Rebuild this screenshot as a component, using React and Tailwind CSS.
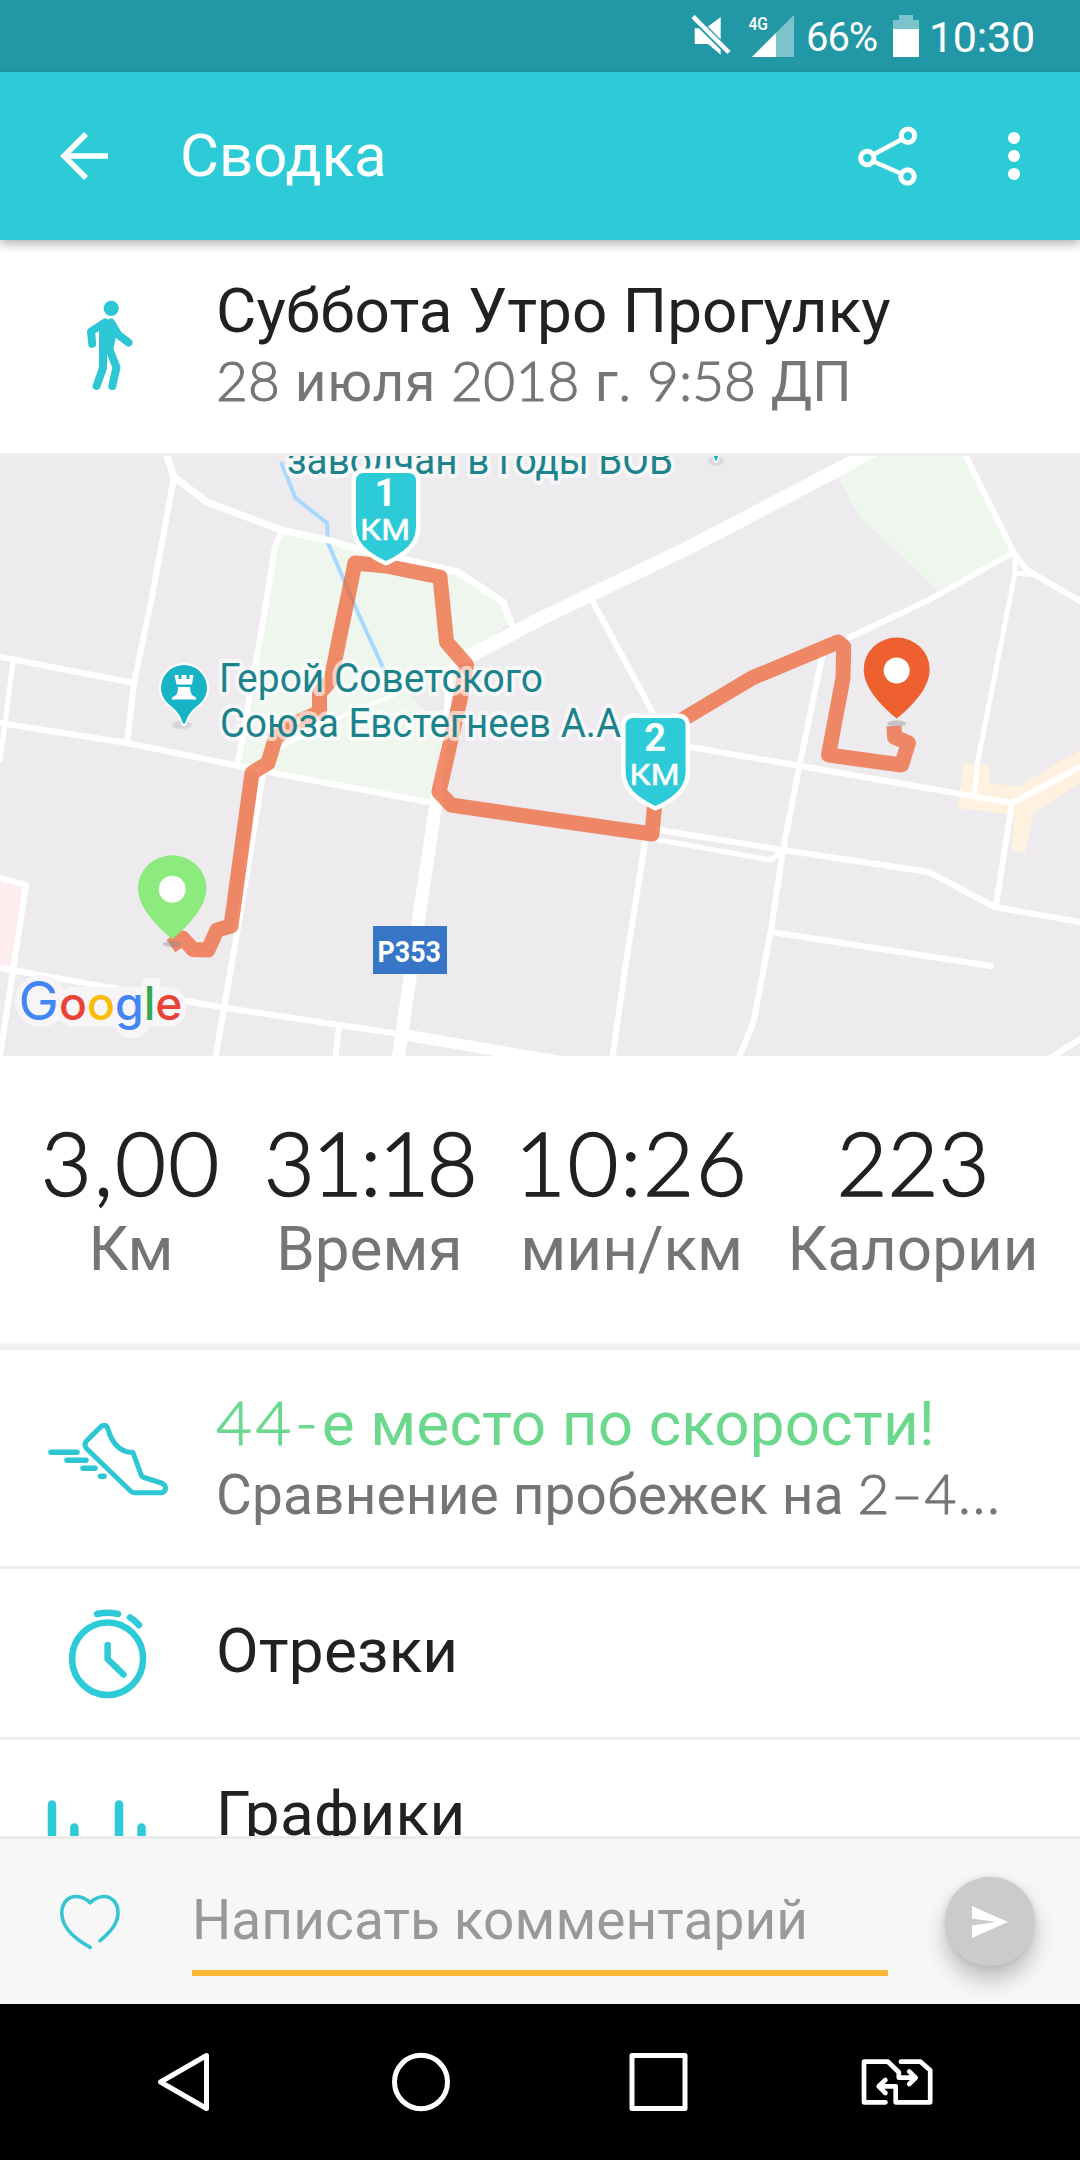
import React, { useState } from "react";

const stats = [
  { value: "3,00", label: "Км", box: "w-[172px]", spacing: "tracking-[2px]" },
  { value: "31:18", label: "Время", box: "w-[206px]", spacing: "tracking-[-2.8px]" },
  { value: "10:26", label: "мин/км", box: "w-[220px]", spacing: "tracking-[1.7px]" },
  { value: "223", label: "Калории", box: "w-[244px]", spacing: "tracking-normal" },
];

const parks = [
  "282,532 328,542 458,572 503,602 510,623 468,655 448,670 448,700 429,802 238,765 255,657 275,547",
  "862,456 965,456 1010,553 939,593 888,543 860,518 836,473",
];

// [points, width]
const roads = [
  ["165,450 174,477 207,502 281,530 327,540 362,550 458,572 503,602 511,623", 7],
  ["174,477 152,597 134,683 127,743", 6],
  ["0,657 134,683", 6],
  ["13,662 5,723 0,760", 5],
  ["0,723 127,743 244,767 269,772 427,802", 6],
  ["281,532 275,547 262,627 238,762", 6],
  ["263,773 241,910 215,1060", 6],
  ["468,657 450,668 446,730 437,797", 7],
  ["437,797 418,923 398,1060", 13],
  ["468,657 540,619 688,548 843,467 875,449", 14],
  ["592,600 654,715", 6],
  ["963,450 1015,555 1027,570 1080,601", 6],
  ["1012,553 929,600 850,637", 6],
  ["1015,555 1015,573 977,765 975,793", 5],
  ["1015,573 1036,575", 5],
  ["822,657 800,763 783,850 771,930 753.5,1022 738,1060", 6],
  ["690,747 795,765 1012,803 1080,767", 6],
  ["659,830 783,850 929,872 994.5,907 1080,922", 6],
  ["659,840 771,860 781,852", 5],
  ["771,932 991,966", 6],
  ["1012,803 996,905", 6],
  ["645,842 626,963 612,1060", 6],
  ["0,878 26,885 0,1056", 6],
  ["0,968 220,1007 339,1025 393,1033", 6],
  ["400,1034 540,1058 570,1063", 11],
  ["339,1027 335,1060", 6],
  ["1050,1058 1082,1038", 6],
  ["281,747 345,715 396,694", 4],
];

const route =
  "171,946 182.5,938 193,949.5 208,950 217,930 231,926 252,773 268,763 275.5,738 288,727 319.5,712 319.5,693 331,680 339,640 355,563 386,566 440,577 446.5,642 466.5,665 460,700 439,792 451,805 540,818 652,834 655,800 655,740 685,718 752,678 838,642 843.7,647 843,678 828.5,755 901.5,765 908.5,743 894.5,737 894,726";

const mapLabels = [
  { text: "заводчан в годы ВОВ", x: 287, y: 474, width: 386 },
  { text: "Герой Советского", x: 219, y: 691.5, width: 324 },
  { text: "Союза Евстегнеев А.А", x: 220, y: 737, width: 401 },
];

function StatusBar() {
  return (
    <div className="flex h-[72px] items-center justify-end bg-[#2298a6] pr-[45px] text-white">
      <svg width="39" height="42" viewBox="0 0 39 42" fill="#fff">
        <path d="M1 1.5 37 37.500" stroke="#fff" strokeWidth="4.500" />
        <path d="M16 11.500 28.700 2v22.500zM2.700 13.300h4.300l21.700 21.500v5L16 29H2.700z" />
      </svg>
      <svg className="ml-[17px]" width="47" height="42" viewBox="0 0 47 42">
        <path d="M46 0v42H4z" fill="#7cc3cb" />
        <path d="M28 18v24H4z" fill="#fff" />
        <text x="0.500" y="15" className="font-['Roboto'] text-[18px] font-medium" textLength="19.500" lengthAdjust="spacingAndGlyphs" fill="#fff">
          4G
        </text>
      </svg>
      <span className="ml-[11px] w-[87px] pt-[3px] text-[40px] tracking-[-1px]">66%</span>
      <svg width="26" height="42" viewBox="0 0 26 42">
        <path d="M6 0h14v5h6v9H0V5h6z" fill="#7cc3cb" />
        <path d="M0 14h26v28H0z" fill="#fff" />
      </svg>
      <span className="ml-[10px] pt-[2px] text-[43px] tracking-[-0.2px]">10:30</span>
    </div>
  );
}

function Header() {
  return (
    <header className="relative z-10 flex h-[168px] items-center bg-[#2dcbd7] pl-[60px] pr-[60px] text-white shadow-[0_4px_10px_rgba(0,0,0,0.3)]">
      <svg width="48" height="48" viewBox="0 0 48 48" fill="none" stroke="#fff" strokeWidth="5.500">
        <path d="M48 24H4M26 2 4 24l22 22" />
      </svg>
      <h1 className="ml-[72px] text-[60px]">Сводка</h1>
      <svg className="ml-auto" width="60" height="60" viewBox="0 0 60 60" fill="none" stroke="#fff">
        <path d="M14.500 29 44.500 13M14.500 35l29.500 13" strokeWidth="4.500" />
        <circle cx="50" cy="9.700" r="6.700" strokeWidth="5" />
        <circle cx="9.300" cy="32" r="6.700" strokeWidth="5" />
        <circle cx="49.500" cy="50.500" r="6.700" strokeWidth="5" />
      </svg>
      <svg className="ml-[90px]" width="12" height="48" viewBox="0 0 12 48" fill="#fff">
        <circle cx="6" cy="6" r="6" />
        <circle cx="6" cy="24" r="6" />
        <circle cx="6" cy="42" r="6" />
      </svg>
    </header>
  );
}

function WalkIcon() {
  return (
    <svg width="46" height="91" viewBox="0 0 46 91" fill="none" stroke="#2dc6d4" strokeWidth="8" strokeLinecap="round" strokeLinejoin="round">
      <circle cx="24.200" cy="8.300" r="7.600" fill="#2dc6d4" stroke="none" />
      <path d="M18 22.500 4 31.500l1.200 12.300M24 22.500 31.500 35l10 7.500" />
      <path d="M16 24l9 1 1 6-3 15h-7z" fill="#2dc6d4" />
      <path d="M16 46v22L9.600 86M21.500 47l8 20.500L25.300 86" />
    </svg>
  );
}

function ShoeIcon() {
  return (
    <svg width="124" height="74" viewBox="0 0 124 74" fill="none" stroke="#2dc6d4" strokeWidth="5" strokeLinecap="round" strokeLinejoin="round">
      <path d="M53 4.500 39.500 18q-3 3.500 0 7.500L83.500 68q1.700 1.700 4 1.700h27q4-.7 4-5-.3-3-4-4.700L97 54.500q-2.500-.8-3-3L86 29.500l-7-.8Q66 24 61 6.500q-1-4.500-4-4.300-2 .3-4 2.300z" />
      <path d="M4 29.300H30M20 37.300h19M36 45.300h12M53.500 53.300H57" strokeWidth="5.500" />
    </svg>
  );
}

function TimerIcon() {
  return (
    <svg width="78" height="90" viewBox="0 0 78 90" fill="none" stroke="#2dcbd7" strokeWidth="6.500" strokeLinecap="round" strokeLinejoin="round">
      <ellipse cx="38.600" cy="49.700" rx="35.500" ry="36.300" />
      <path d="M38.600 36v14L54.500 65.500M28 5q10.500-2.300 21 0M61 8.500q5 3 9 7.500" />
    </svg>
  );
}

function BarsIcon() {
  return (
    <svg width="99" height="90" viewBox="0 0 99 90" fill="none" stroke="#2dcbd7" strokeWidth="8.500" strokeLinecap="round">
      <path d="M5 4.500V86M27.400 27.500V86M72 4.500V86M94.500 27.500V86" />
    </svg>
  );
}

function KmMarker({ x, y, n }) {
  return (
    <g transform={`translate(${x} ${y})`}>
      <path
        d="M-22 0h44q8 0 8 8v46q0 14-13 24Q9 84 0 88q-9-4-17-10-13-10-13-24V8q0-8 8-8z"
        fill="#2dcbd7"
        stroke="#fff"
        strokeWidth="9"
        strokeLinejoin="round"
        className="[paint-order:stroke]"
      />
      <text x="-0.500" y="33" textAnchor="middle" className="font-['Roboto'] text-[38px] font-bold" fill="#fff">
        {n}
      </text>
      <text x="-26" y="66.500" textLength="50" lengthAdjust="spacingAndGlyphs" className="font-['Roboto'] text-[29px]" fill="#fff" stroke="#fff" strokeWidth="0.5">
        КМ
      </text>
    </g>
  );
}

function Pin({ x, y, scale, color }) {
  return (
    <g>
      <ellipse cx={x} cy={y + 5} rx="9.500" ry="3" fill="#8a8a90" fillOpacity="0.4" />
      <g transform={`translate(${x} ${y}) scale(${scale})`}>
        <path d="M0 0C-16-13-33-31-33-49a33 32 0 0 1 66 0C33-31 16-13 0 0z" fill={color} />
        <circle cy="-48" r="13" fill="#fff" />
      </g>
    </g>
  );
}

function RouteMap() {
  return (
    <svg className="block" width="1080" height="600" viewBox="0 456 1080 600">
      <rect y="456" width="1080" height="600" fill="#edebee" />
      {parks.map((points) => (
        <polygon key={points} points={points} fill="#eef6ee" />
      ))}
      <path d="M404 690l40-12v32l-18 2z" fill="#edebee" />
      <path d="M0 880l24 6-12 81H0z" fill="#fdedee" />
      <path d="M963.500 763l26.500 2-1 18 30 4 37-24 24-12v32l-46 29-9 41-13.500-3 3-35-57-7z" fill="#fff1df" />
      {roads.map(([points, width]) => (
        <polyline key={points} points={points} fill="none" stroke="#fff" strokeWidth={width} strokeLinejoin="round" strokeLinecap="round" />
      ))}
      <polyline points="281,462 295.500,498 327,523 328,543 358,613 386,674" fill="none" stroke="#a9d8ff" strokeWidth="4" />
      <polyline points="324,539 332,541" fill="none" stroke="#fff" strokeWidth="6" />
      <polyline points={route} fill="none" stroke="#ee6030" strokeOpacity="0.72" strokeWidth="15" strokeLinejoin="round" />

      {mapLabels.map((label) => (
        <text
          key={label.text}
          x={label.x}
          y={label.y}
          textLength={label.width}
          lengthAdjust="spacingAndGlyphs"
          className="font-['Roboto'] text-[41.5px] [paint-order:stroke]"
          fill="#1b838c"
          stroke="#fff"
          strokeOpacity="0.6"
          strokeWidth="8"
          strokeLinejoin="round"
        >
          {label.text}
        </text>
      ))}

      <ellipse cx="716" cy="461" rx="8" ry="5" fill="#dddbde" />
      <path d="M711 450h10l-3.500 10.500q-1.500 2.500-3 0z" fill="#17b4c6" stroke="#fff" strokeWidth="1.500" />

      <ellipse cx="182" cy="725" rx="10" ry="4" fill="#d6d4d8" />
      <path d="M184 725q-2 0-3-4-3-9-14-17-7-7-7-16a24 24 0 0 1 48 0q0 9-7 16-11 8-14 17-1 4-3 4z" fill="#17b4c6" stroke="#fff" strokeWidth="2" />
      <path d="M174.500 675h4v4h3v-4h5v4h3v-4h4l-1.500 9.500h-15.500zM178 687h12q.5 6 2 8l4 2.500v2h-24v-2l4-2.500q2-2 2-8z" fill="#fff" />

      <rect x="373" y="926" width="74" height="48" fill="#3775c7" />
      <text x="377.500" y="961.500" textLength="63.500" lengthAdjust="spacingAndGlyphs" className="font-['Roboto'] text-[29px] font-bold" fill="#fff">
        P353
      </text>

      <g fill="#f8f5f9">
        <circle cx="41" cy="1001" r="26" />
        <rect x="56" y="987" width="130" height="40" rx="18" />
        <rect x="142" y="978" width="18" height="46" />
        <rect x="115" y="990" width="34" height="48" rx="14" />
      </g>
      <text x="18.500" y="1020" textLength="164" lengthAdjust="spacingAndGlyphs" className="font-['Inter'] text-[46px] font-medium">
        <tspan className="text-[54px] font-normal" fill="#4285f4">G</tspan>
        <tspan fill="#ea4335">o</tspan>
        <tspan fill="#fbbc05">o</tspan>
        <tspan fill="#4285f4">g</tspan>
        <tspan fill="#34a853">l</tspan>
        <tspan fill="#ea4335">e</tspan>
      </text>

      <KmMarker x={386} y={473} n="1" />
      <KmMarker x={655.6} y={718} n="2" />
      <Pin x={172.2} y={939} scale={1.035} color="#8deb7d" />
      <Pin x={896.7} y={718.5} scale={1} color="#ee6030" />
    </svg>
  );
}

// light digits sit next to the regular Cyrillic text
function Num({ children, className = "" }) {
  return (
    <span className={`font-['Lato'] font-light leading-none [-webkit-text-stroke:1.1px_currentColor] ${className}`}>
      {children}
    </span>
  );
}

function Row({ icon, children, className }) {
  return (
    <div className={`flex ${className}`}>
      <div className="flex w-[216px] shrink-0 items-start">{icon}</div>
      <div className="min-w-0 whitespace-nowrap">{children}</div>
    </div>
  );
}

function CommentBar() {
  const [comment, setComment] = useState("");

  return (
    <div className="flex h-[168px] items-start border-t-[3px] border-[#ececec] bg-[#f7f7f7] pl-[60px]">
      <svg className="mt-[54px]" width="60" height="57" viewBox="0 0 60 57" fill="none" stroke="#36c5d2" strokeWidth="3.600" strokeLinecap="round" strokeLinejoin="round">
        <path d="M30.200 54.300C14 45.500 1.800 34 1.800 20 1.800 10 8 3.500 16 3.500c6 0 10 2 14.200 6.300C34.500 5.500 38.500 3.500 44 3.500c8 0 14 6.500 14 16.500 0 11-9 20.500-18 27.700" />
      </svg>
      <input
        value={comment}
        onChange={(e) => setComment(e.target.value)}
        placeholder="Написать комментарий"
        className="ml-[72px] mt-[48px] h-[89px] w-[696px] border-b-[6px] border-[#fcb636] bg-transparent pb-[17px] text-[55px] leading-[66px] tracking-[0.1px] outline-none placeholder:text-[#999999] placeholder:opacity-100"
      />
      <button className="ml-[57px] mt-[38px] flex h-[89px] w-[90px] items-center justify-center rounded-full bg-[#cbcbcb] shadow-[0_14px_22px_rgba(0,0,0,0.24),0_0_6px_rgba(0,0,0,0.1)]">
        <svg width="36" height="32" viewBox="0 0 36 32" fill="#fff">
          <path d="M0 0 36 16 0 32V19.500L24 16 0 12.500z" />
        </svg>
      </button>
    </div>
  );
}

function NavBar() {
  return (
    <nav className="flex h-[156px] items-center bg-black pl-[157px]">
      <svg width="52" height="60" viewBox="0 0 52 60" fill="none" stroke="#fff" strokeWidth="5" strokeLinejoin="round">
        <path d="M49.500 3.500v53L3.500 30z" />
      </svg>
      <svg className="ml-[183px]" width="58" height="60" viewBox="0 0 58 60" fill="none" stroke="#fff" strokeWidth="5">
        <ellipse cx="29" cy="30" rx="26.500" ry="26.700" />
      </svg>
      <svg className="ml-[179px]" width="59" height="60" viewBox="0 0 59 60" fill="none" stroke="#fff" strokeWidth="5" strokeLinejoin="round">
        <path d="M3 3.500h53v53H3z" />
      </svg>
      <svg className="ml-[173px]" width="72" height="48" viewBox="0 0 72 48" fill="none" stroke="#fff" strokeWidth="4.700" strokeLinecap="round" strokeLinejoin="round">
        <path d="M24.500 44.300H3V3.700h24l10.800 10.600v5.400H54M48.200 13.500l6.500 6.200-6.500 6.300" />
        <path d="M39.900 3.700h19.600l9.700 8.600v32H34.700v-16H18M24.400 22l-6.700 6.300 6.700 6.700" />
      </svg>
    </nav>
  );
}

function App() {
  return (
    <div className="flex h-[2160px] w-[1080px] flex-col overflow-hidden bg-white font-['Roboto',sans-serif] text-[#212121]">
      <StatusBar />
      <Header />

      <Row className="h-[213px] pt-[35px]" icon={<div className="pl-[87px] pt-[25px]"><WalkIcon /></div>}>
        <h2 className="text-[62px] leading-[72px] tracking-[0.08px]">Суббота Утро Прогулку</h2>
        <p className="mt-[2px] text-[55px] leading-[66px] text-[#757575] [word-spacing:1.2px]">
          <Num>28</Num> <span className="tracking-[0.8px]">июля</span> <Num className="tracking-[0.3px]">2018</Num> г. <Num>9:58</Num> ДП
        </p>
      </Row>

      <section className="h-[603px] border-t-[3px] border-[#efefef]">
        <RouteMap />
      </section>

      <section className="flex h-[286px] justify-between px-[45px] pt-[58px]">
        {stats.map((s) => (
          <div key={s.label} className={`flex flex-col items-center whitespace-nowrap ${s.box}`}>
            <span className={`font-['Lato'] text-[88px] font-light leading-[96px] [-webkit-text-stroke:1.5px_currentColor] ${s.spacing}`}>
              {s.value}
            </span>
            <span className="mt-[3px] text-[62px] leading-[72px] text-[#757575]">{s.label}</span>
          </div>
        ))}
      </section>
      <div className="h-[8px] bg-linear-to-b from-[#f9f9f9] to-[#ebebeb]" />

      <Row className="h-[219px] border-b-[3px] border-[#eeeeee] pt-[38px]" icon={<div className="pl-[47px] pt-[35px]"><ShoeIcon /></div>}>
        <p className="text-[62px] leading-[72px] text-[#6bd88e]">
          <Num className="tracking-[3.6px]">44-</Num>
          <span className="tracking-[0.15px]">е место по скорости!</span>
        </p>
        <p className="mt-[2px] text-[55px] leading-[66px] text-[#757575]">
          <span className="tracking-[0.15px]">Сравнение пробежек на </span>
          <Num className="tracking-[1.6px]">2–4...</Num>
        </p>
      </Row>

      <Row className="h-[171px] border-b-[3px] border-[#eeeeee] pt-[46px]" icon={<div className="-mt-[6px] pl-[69px]"><TimerIcon /></div>}>
        <p className="text-[62px] leading-[72px] tracking-[0.2px]">Отрезки</p>
      </Row>

      <Row className="h-[96px] overflow-hidden pt-[38px]" icon={<div className="pl-[47px] pt-[22px]"><BarsIcon /></div>}>
        <p className="text-[62px] leading-[72px] tracking-[0.4px]">Графики</p>
      </Row>

      <CommentBar />
      <NavBar />
    </div>
  );
}

export default App;
